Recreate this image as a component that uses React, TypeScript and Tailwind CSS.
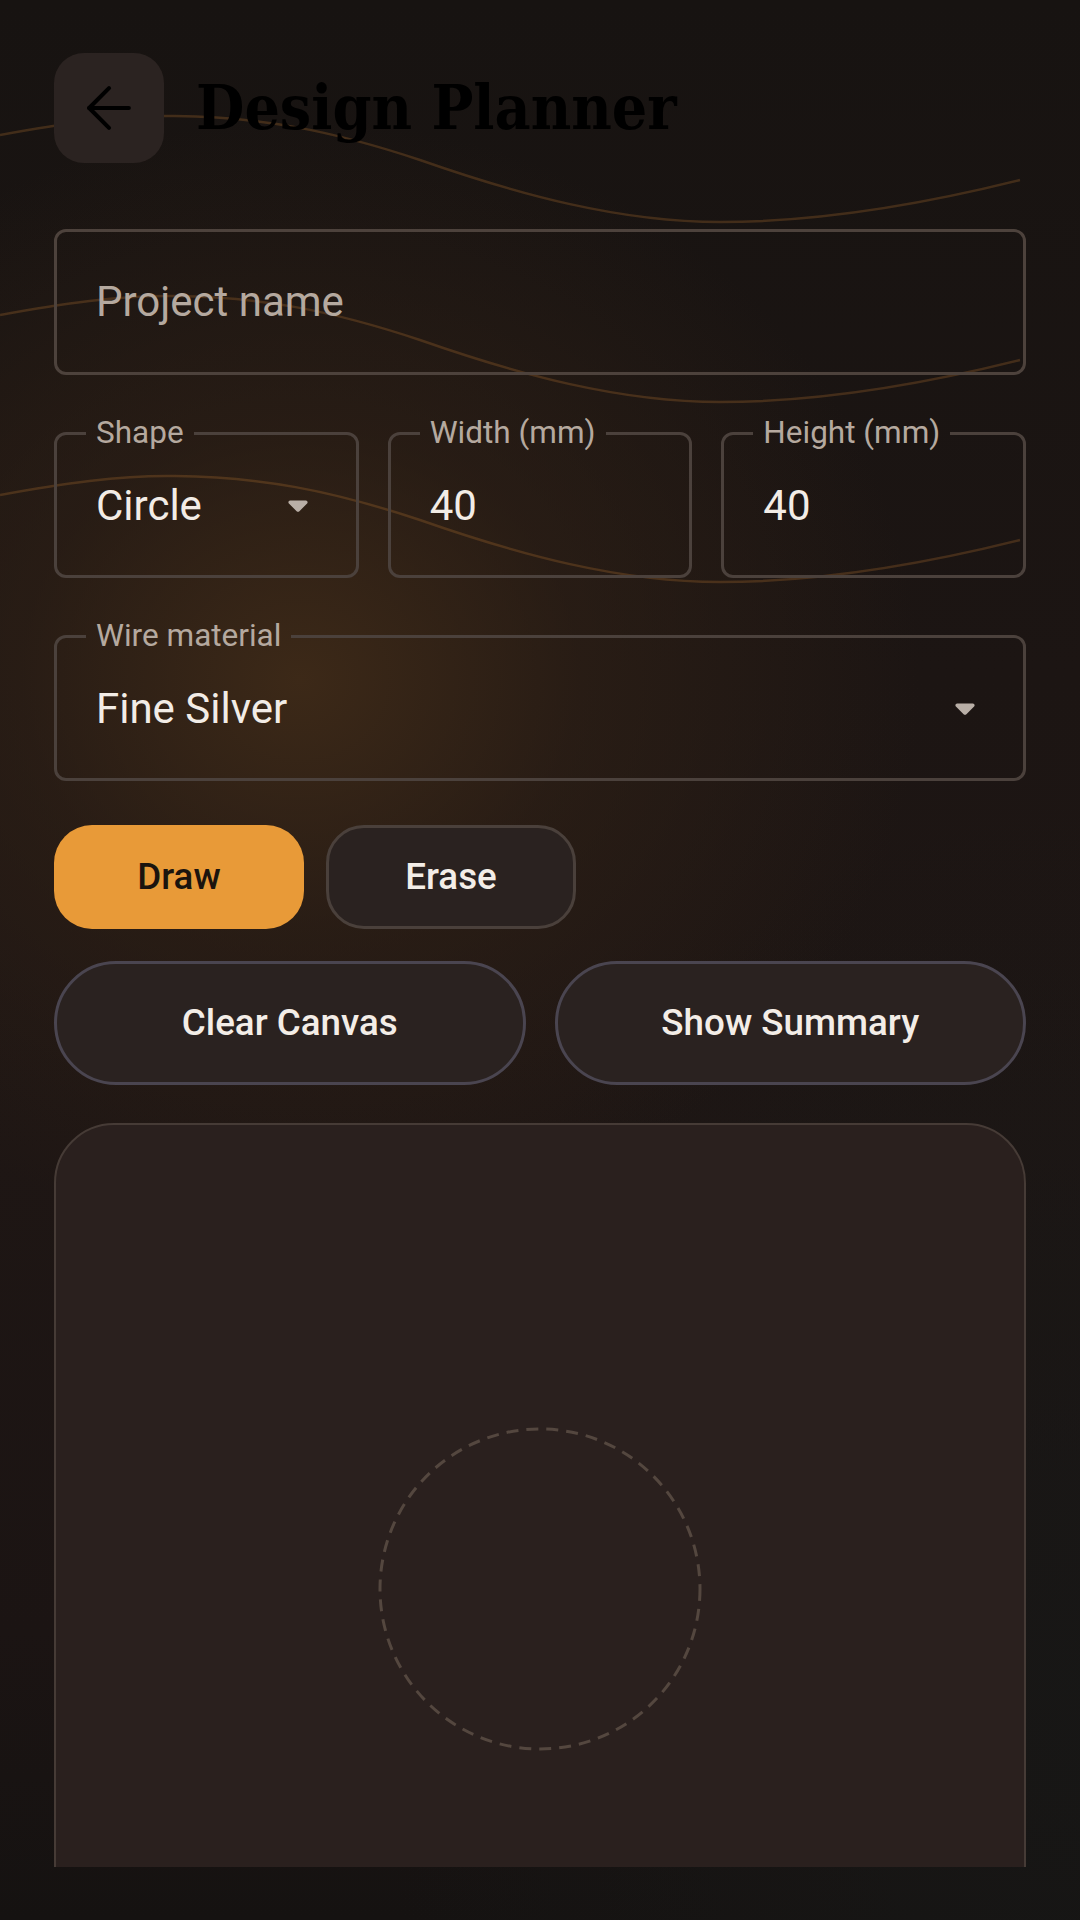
import React from "react";

function Caret() {
  return (
    <svg width="20" height="12" viewBox="0 0 20 12" className="shrink-0">
      <path d="M2.2 0.5h15.6c1.6 0 2.4 1.9 1.3 3L11.4 11.2c-0.8 0.8-2 0.8-2.8 0L0.9 3.5C-0.2 2.4 0.6 0.5 2.2 0.5z" fill="#b9afa7" />
    </svg>
  );
}

function Field({ label, value, caret }: { label: string; value: string; caret?: boolean }) {
  return (
    <fieldset className="border-[3px] border-[#4b413c] rounded-[12px] min-w-0">
      <legend className="ml-[29px] px-[10px] text-[31.5px] leading-[32px] text-[#b5a99f]">{label}</legend>
      <div className="h-[126px] pb-[13px] pl-[39px] pr-[48px] flex items-center justify-between">
        <span className="text-[42px] leading-none text-[#f2ece6]">{value}</span>
        {caret && <Caret />}
      </div>
    </fieldset>
  );
}

export default function App() {
  const wave = "M0,135 C60,124 120,115 175,116 C260,117 330,130 420,160 C520,195 620,222 720,222 C820,222 920,205 1020,180";
  return (
    <div className="relative w-[1080px] h-[1920px] overflow-hidden font-['Roboto',sans-serif] bg-[#1b1513] bg-[image:radial-gradient(ellipse_620px_560px_at_300px_680px,rgba(62,42,24,0.95)_0%,rgba(50,34,22,0.55)_45%,rgba(27,21,19,0)_100%),radial-gradient(ellipse_700px_900px_at_1080px_1700px,rgba(23,23,22,0.9)_0%,rgba(23,23,22,0)_100%),linear-gradient(180deg,#171311_0%,#1c1513_35%,#1e1614_60%,#1b1413_85%,#151211_100%)]">
      <svg className="absolute left-0 top-0 pointer-events-none" width="1080" height="1920" viewBox="0 0 1080 1920">
        <g fill="none" stroke="rgba(190,120,50,0.26)" strokeWidth="2.5">
          <path d={wave} />
          <path d={wave} transform="translate(0,180)" />
          <path d={wave} transform="translate(0,360)" />
        </g>
      </svg>

      <div className="relative h-[1867px] overflow-hidden px-[54px] pt-[53px] flex flex-col">
        <div className="shrink-0 flex items-center gap-[32px]">
          <button className="w-[110px] h-[110px] rounded-[30px] bg-[#2b2321] flex items-center justify-center shrink-0">
            <svg width="68" height="68" viewBox="0 0 24 24" fill="none" stroke="#000" strokeWidth="1.45" strokeLinecap="round" strokeLinejoin="round">
              <path d="M19 12H5" />
              <path d="m12 19-7-7 7-7" />
            </svg>
          </button>
          <h1 className="font-['DejaVu_Serif_Condensed','DejaVu_Serif',serif] font-bold text-[62px] leading-none text-black whitespace-nowrap">
            Design Planner
          </h1>
        </div>

        <div className="shrink-0 mt-[66px] h-[146px] border-[3px] border-[#4d423c] rounded-[12px] flex items-center pl-[39px]">
          <span className="text-[42px] leading-none text-[#b5a99f]">Project name</span>
        </div>

        <div className="shrink-0 mt-[42px] grid grid-cols-3 gap-[29px]">
          <Field label="Shape" value="Circle" caret />
          <Field label="Width (mm)" value="40" />
          <Field label="Height (mm)" value="40" />
        </div>

        <div className="shrink-0 mt-[42px]">
          <Field label="Wire material" value="Fine Silver" caret />
        </div>

        <div className="shrink-0 mt-[44px] flex gap-[22px]">
          <button className="w-[250px] h-[104px] rounded-[38px] bg-[#e89a38] text-[36.75px] font-medium text-[#1b140e] flex items-center justify-center">
            Draw
          </button>
          <button className="w-[250px] h-[104px] rounded-[38px] bg-[#2a2220] border-[3px] border-[#4a403b] text-[36.75px] font-medium text-[#f3ede7] flex items-center justify-center">
            Erase
          </button>
        </div>

        <div className="shrink-0 mt-[32px] grid grid-cols-2 gap-[29px]">
          <button className="h-[124px] rounded-full bg-[#2a2220] border-[3px] border-[#4a4550] text-[36.75px] font-medium text-[#f3ede7] flex items-center justify-center">
            Clear Canvas
          </button>
          <button className="h-[124px] rounded-full bg-[#2a2220] border-[3px] border-[#4a4550] text-[36.75px] font-medium text-[#f3ede7] flex items-center justify-center">
            Show Summary
          </button>
        </div>

        <div className="mt-[38px] h-[932px] shrink-0 rounded-[60px] bg-[#2a201e] border-[2px] border-[#463b36] flex items-center justify-center">
          <svg width="330" height="330" viewBox="0 0 330 330">
            <circle cx="165" cy="165" r="160" fill="none" stroke="#54473f" strokeWidth="3" strokeDasharray="12 8" />
          </svg>
        </div>
      </div>
    </div>
  );
}
